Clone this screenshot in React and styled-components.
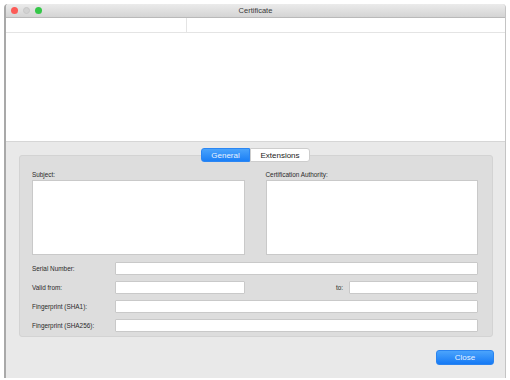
import React from "react";
import styled, { createGlobalStyle } from "styled-components";

const GlobalStyle = createGlobalStyle`
  html, body {
    margin: 0;
    padding: 0;
    background: #ffffff;
  }
  body {
    font-family: "Liberation Sans", Arial, sans-serif;
  }
`

const Page = styled.div`
  width: 510px;
  height: 380px;
  padding: 4px 4px 2px 4px;
  box-sizing: border-box;
`
const Window = styled.div`
  display: flex;
  flex-direction: column;
  height: 100%;
  border-left: 2px solid #a9a9a9;
  border-right: 1px solid #c4c4c4;
  border-radius: 4px 4px 0 0;
  overflow: hidden;
  background: #e9e9e9;
`
const TitleBar = styled.div`
  position: relative;
  display: flex;
  align-items: center;
  justify-content: center;
  height: 13px;
  flex: none;
  background: linear-gradient(#ebebeb, #d4d4d4);
  border-bottom: 1px solid #b9b9b9;
`
const Lights = styled.div`
  position: absolute;
  left: 5px;
  top: 3px;
  display: flex;
  gap: 5px;
`
const Light = styled.span`
  width: 7px;
  height: 7px;
  box-sizing: border-box;
  border-radius: 50%;
  background: ${p => p.color};
  border: ${p => p.idle ? "1px solid #c6c6c6" : "none"};
`
const Title = styled.span`
  font-size: 7.5px;
  color: #3a3a3a;
`
const ListArea = styled.div`
  height: 123px;
  flex: none;
  background: #ffffff;
  border-bottom: 1px solid #d6d6d6;
`
const ListHeader = styled.div`
  display: flex;
  height: 14px;
  border-bottom: 1px solid #e4e4e4;
`
const HeaderCell = styled.div`
  width: ${p => p.w};
  border-right: ${p => p.divider ? "1px solid #e4e4e4" : "none"};
`
const Bottom = styled.div`
  flex: 1;
  display: flex;
  flex-direction: column;
  padding: 6px 11px 0 13px;
`
const Tabs = styled.div`
  display: flex;
  justify-content: center;
  position: relative;
  z-index: 1;
  margin-bottom: -7px;
  padding-right: 2px;
`
const Tab = styled.div`
  display: flex;
  align-items: center;
  justify-content: center;
  width: ${p => p.w}px;
  height: 14px;
  box-sizing: border-box;
  font-size: 8px;
  color: ${p => p.active ? "#e8f2ff" : "#222"};
  background: ${p => p.active ? "linear-gradient(#4aa3fb, #1b7ff6)" : "#ffffff"};
  border: 1px solid ${p => p.active ? "#2b86f3" : "#cdcdcd"};
  border-radius: ${p => p.first ? "3px 0 0 3px" : "0 3px 3px 0"};
`
const TabBox = styled.div`
  height: 182px;
  box-sizing: border-box;
  margin-right: 1px;
  padding: 15px 14px 0 12px;
  background: #dddddd;
  border: 1px solid #d3d3d3;
  border-radius: 3px;
`
const Columns = styled.div`
  display: flex;
  gap: 21px;
`
const Column = styled.div`
  flex: 1;
  display: flex;
  flex-direction: column;
`
const Label = styled.span`
  font-size: 6.4px;
  color: #2a2a2a;
  line-height: 8px;
  width: ${p => p.w || "auto"};
  text-align: ${p => p.right ? "right" : "left"};
  flex: none;
`
const BigBox = styled.div`
  height: 75px;
  margin-top: 1px;
  background: #ffffff;
  border: 1px solid #c9c9c9;
  box-sizing: border-box;
`
const Fields = styled.div`
  display: flex;
  flex-direction: column;
  gap: 6px;
  margin-top: 7px;
`
const Row = styled.div`
  display: flex;
  align-items: center;
`
const Field = styled.div`
  flex: ${p => p.grow ? 1 : "none"};
  width: ${p => p.w ? p.w + "px" : "auto"};
  margin-left: ${p => p.gap || 0}px;
  height: 13px;
  box-sizing: border-box;
  background: #ffffff;
  border: 1px solid #c9c9c9;
  border-radius: 1px;
`
const Footer = styled.div`
  display: flex;
  justify-content: flex-end;
  padding-top: 13px;
`
const CloseButton = styled.button`
  width: 58px;
  height: 15px;
  padding: 0;
  font-family: "Liberation Sans", Arial, sans-serif;
  font-size: 8px;
  color: #eaf3ff;
  background: linear-gradient(#4ba4fc, #167af5);
  border: 1px solid #2a84f0;
  border-radius: 3px;
`

export default function App() {
  return (
    <Page>
      <GlobalStyle />
      <Window>
        <TitleBar>
          <Lights>
            <Light color="#fc5b57" />
            <Light color="#d2d2d2" idle />
            <Light color="#34c748" />
          </Lights>
          <Title>Certificate</Title>
        </TitleBar>
        <ListArea>
          <ListHeader>
            <HeaderCell w="180px" divider />
            <HeaderCell w="auto" />
          </ListHeader>
        </ListArea>
        <Bottom>
          <Tabs>
            <Tab w={49} active first>General</Tab>
            <Tab w={60}>Extensions</Tab>
          </Tabs>
          <TabBox>
            <Columns>
              <Column>
                <Label>Subject:</Label>
                <BigBox />
              </Column>
              <Column>
                <Label>Certification Authority:</Label>
                <BigBox />
              </Column>
            </Columns>
            <Fields>
              <Row>
                <Label w="83px">Serial Number:</Label>
                <Field grow />
              </Row>
              <Row>
                <Label w="83px">Valid from:</Label>
                <Field w={130} />
                <Label w="98px" right>to:</Label>
                <Field grow gap={6} />
              </Row>
              <Row>
                <Label w="83px">Fingerprint (SHA1):</Label>
                <Field grow />
              </Row>
              <Row>
                <Label w="83px">Fingerprint (SHA256):</Label>
                <Field grow />
              </Row>
            </Fields>
          </TabBox>
          <Footer>
            <CloseButton>Close</CloseButton>
          </Footer>
        </Bottom>
      </Window>
    </Page>
  );
}
